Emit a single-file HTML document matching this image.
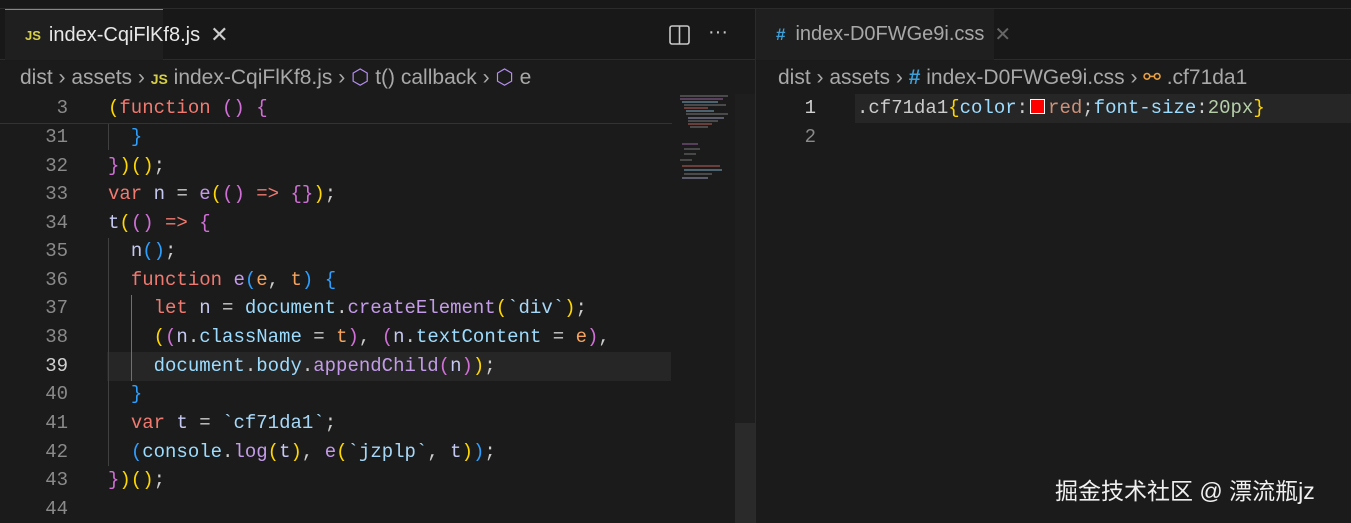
<!DOCTYPE html>
<html><head><meta charset="utf-8"><style>
*{margin:0;padding:0;box-sizing:border-box}
body{width:1351px;height:523px;background:#1a1a1a;overflow:hidden;position:relative;font-family:"Liberation Sans",sans-serif;color:#ccc}
.top{position:absolute;left:0;top:0;width:1351px;height:9px;background:#181818;border-bottom:1px solid #2b2b2b}
.tabbar{position:absolute;top:9px;height:51px;background:#181818;border-bottom:1px solid #2b2b2b}
.tab{position:absolute;top:0;height:51px;background:#1f1f1f;font-size:20px;display:flex;align-items:center;padding-left:20px;white-space:nowrap}
.crumb{position:absolute;top:65px;font-size:21px;color:#a8a8a8;white-space:nowrap;letter-spacing:0}
.code{position:absolute;font-family:"Liberation Mono",monospace;font-size:19px;white-space:pre}
.ln{position:absolute;width:68px;text-align:right;font-family:"Liberation Mono",monospace;font-size:19px;color:#8a8a8a}
.k{color:#f07a70}.v{color:#c5c8f0}.y{color:#ffd700}.p{color:#d070d6}.b{color:#2c9fff}.o{color:#f6a35e}.d{color:#9cdcfe}.m{color:#c39be8}.s{color:#a8d8f8}.w{color:#ccc}.c{color:#8fd0f0}
.sep{position:absolute;left:755px;top:9px;width:1px;height:514px;background:#2b2b2b}
</style></head><body>
<div class="top"></div>
<div class="tabbar" style="left:0;width:755px">
 <div class="tab" style="left:5px;width:158px;border-top:1px solid #3a9fd8;padding-left:20px"><span style="color:#d6cf48;font-size:13px;font-weight:bold;margin-right:8px">JS</span><span style="color:#e8e8e8">index-CqiFlKf8.js</span><span style="margin-left:10px;color:#ccc;font-size:22px">✕</span></div>
 <svg style="position:absolute;left:668px;top:15px" width="24" height="22" viewBox="0 0 24 22"><rect x="2" y="2" width="19" height="18" rx="2" fill="none" stroke="#c8c8c8" stroke-width="1.6"/><line x1="11.5" y1="2" x2="11.5" y2="20" stroke="#c8c8c8" stroke-width="1.6"/></svg>
 <div style="position:absolute;left:708px;top:12px;font-size:20px;color:#c8c8c8">···</div>
</div>
<div class="tabbar" style="left:756px;width:595px">
 <div class="tab" style="left:0;width:238px;background:#1f1f1f"><span style="color:#3d9fd8;font-size:17px;font-weight:bold;margin-right:10px">#</span><span style="color:#a8a8a8">index-D0FWGe9i.css</span><span style="margin-left:10px;color:#666;font-size:20px">✕</span></div>
</div>
<div class="sep"></div>
<div style="position:absolute;left:0;top:61px;width:755px;height:462px;background:#1b1b1b"></div>
<div style="position:absolute;left:756px;top:61px;width:595px;height:462px;background:#1b1b1b"></div>
<div class="crumb" style="left:20px">dist › assets › <span style="color:#d6cf48;font-size:14px;font-weight:bold">JS</span> index-CqiFlKf8.js › <span style="color:#b58ef0">⬡</span> t() callback › <span style="color:#b58ef0">⬡</span> e</div>
<div class="crumb" style="left:778px">dist › assets › <span style="color:#3d9fd8;font-weight:bold">#</span> index-D0FWGe9i.css › <span style="color:#e8a040">⚯</span> .cf71da1</div>

<!-- left editor -->
<div style="position:absolute;left:0;top:94px;width:672px;height:30px;border-bottom:1px solid #333;background:#1b1b1b"></div>
<div style="position:absolute;left:107px;top:352px;width:564px;height:29px;background:#262626"></div>
<div style="position:absolute;left:108px;top:124px;width:1px;height:26px;background:#404040"></div>
<div style="position:absolute;left:108px;top:238px;width:1px;height:228px;background:#404040"></div>
<div style="position:absolute;left:131px;top:295px;width:1px;height:86px;background:#707070"></div>
<div style="position:absolute;left:735px;top:94px;width:20px;height:429px;background:#1e1e1e"></div>
<div style="position:absolute;left:735px;top:423px;width:20px;height:100px;background:#2a2a2a"></div>
<svg style="position:absolute;left:678px;top:94px" width="56" height="90"><g stroke-width="1.2" opacity=".6">
<line x1="2" y1="2" x2="50" y2="2" stroke="#999"/><line x1="2" y1="5" x2="45" y2="5" stroke="#c080d0"/><line x1="4" y1="8" x2="40" y2="8" stroke="#9cdcfe"/><line x1="6" y1="11" x2="48" y2="11" stroke="#999"/><line x1="6" y1="14" x2="30" y2="14" stroke="#f07a70"/><line x1="8" y1="17" x2="36" y2="17" stroke="#9cdcfe"/><line x1="8" y1="20" x2="50" y2="20" stroke="#999"/><line x1="10" y1="24" x2="46" y2="24" stroke="#c5c8f0"/><line x1="10" y1="27" x2="40" y2="27" stroke="#999"/><line x1="10" y1="30" x2="34" y2="30" stroke="#f07a70"/><line x1="12" y1="33" x2="30" y2="33" stroke="#999"/><line x1="4" y1="50" x2="20" y2="50" stroke="#c080d0"/><line x1="6" y1="55" x2="22" y2="55" stroke="#999"/><line x1="6" y1="60" x2="18" y2="60" stroke="#999"/><line x1="2" y1="66" x2="14" y2="66" stroke="#999"/><line x1="4" y1="72" x2="42" y2="72" stroke="#f07a70"/><line x1="6" y1="76" x2="44" y2="76" stroke="#9cdcfe"/><line x1="6" y1="80" x2="34" y2="80" stroke="#999"/><line x1="4" y1="84" x2="30" y2="84" stroke="#c5c8f0"/></g></svg>

<div class="ln" style="top:97px">3</div>
<div class="code" style="left:108px;top:97px"><span class="y">(</span><span class="k">function</span> <span class="p">()</span> <span class="p">{</span></div>
<div class="ln" style="top:126px">31</div><div class="code" style="left:108px;top:126px">  <span class="b">}</span></div>
<div class="ln" style="top:155px">32</div><div class="code" style="left:108px;top:155px"><span class="p">}</span><span class="y">)()</span><span class="w">;</span></div>
<div class="ln" style="top:183px">33</div><div class="code" style="left:108px;top:183px"><span class="k">var</span> <span class="v">n</span> <span class="w">=</span> <span class="m">e</span><span class="y">(</span><span class="p">()</span> <span class="k">=&gt;</span> <span class="p">{}</span><span class="y">)</span><span class="w">;</span></div>
<div class="ln" style="top:212px">34</div><div class="code" style="left:108px;top:212px"><span class="v">t</span><span class="y">(</span><span class="p">()</span> <span class="k">=&gt;</span> <span class="p">{</span></div>
<div class="ln" style="top:240px">35</div><div class="code" style="left:108px;top:240px">  <span class="v">n</span><span class="b">()</span><span class="w">;</span></div>
<div class="ln" style="top:269px">36</div><div class="code" style="left:108px;top:269px">  <span class="k">function</span> <span class="m">e</span><span class="b">(</span><span class="o">e</span><span class="w">,</span> <span class="o">t</span><span class="b">)</span> <span class="b">{</span></div>
<div class="ln" style="top:297px">37</div><div class="code" style="left:108px;top:297px">    <span class="k">let</span> <span class="v">n</span> <span class="w">=</span> <span class="d">document</span><span class="w">.</span><span class="m">createElement</span><span class="y">(</span><span class="s">`div`</span><span class="y">)</span><span class="w">;</span></div>
<div class="ln" style="top:326px">38</div><div class="code" style="left:108px;top:326px">    <span class="y">(</span><span class="p">(</span><span class="v">n</span><span class="w">.</span><span class="d">className</span> <span class="w">=</span> <span class="o">t</span><span class="p">)</span><span class="w">,</span> <span class="p">(</span><span class="v">n</span><span class="w">.</span><span class="d">textContent</span> <span class="w">=</span> <span class="o">e</span><span class="p">)</span><span class="w">,</span></div>
<div class="ln" style="top:355px;color:#d0d0d0">39</div><div class="code" style="left:108px;top:355px">    <span class="d">document</span><span class="w">.</span><span class="d">body</span><span class="w">.</span><span class="m">appendChild</span><span class="p">(</span><span class="v">n</span><span class="p">)</span><span class="y">)</span><span class="w">;</span></div>
<div class="ln" style="top:383px">40</div><div class="code" style="left:108px;top:383px">  <span class="b">}</span></div>
<div class="ln" style="top:412px">41</div><div class="code" style="left:108px;top:412px">  <span class="k">var</span> <span class="v">t</span> <span class="w">=</span> <span class="s">`cf71da1`</span><span class="w">;</span></div>
<div class="ln" style="top:441px">42</div><div class="code" style="left:108px;top:441px">  <span class="b">(</span><span class="d">console</span><span class="w">.</span><span class="m">log</span><span class="y">(</span><span class="v">t</span><span class="y">)</span><span class="w">,</span> <span class="m">e</span><span class="y">(</span><span class="s">`jzplp`</span><span class="w">,</span> <span class="v">t</span><span class="y">)</span><span class="b">)</span><span class="w">;</span></div>
<div class="ln" style="top:469px">43</div><div class="code" style="left:108px;top:469px"><span class="p">}</span><span class="y">)()</span><span class="w">;</span></div>
<div class="ln" style="top:498px">44</div>

<!-- right editor -->
<div style="position:absolute;left:855px;top:94px;width:496px;height:29px;background:#262626"></div>
<div class="ln" style="left:748px;top:97px;color:#d0d0d0">1</div>
<div class="code" style="left:857px;top:97px"><span class="w">.cf71da1</span><span class="y">{</span><span class="d">color</span><span class="w">:</span><span style="display:inline-block;width:15px;height:15px;background:#f00;border:1px solid #fff;vertical-align:-1px;margin:0 3px 0 2px"></span><span style="color:#ce9178">red</span><span class="w">;</span><span class="d">font-size</span><span class="w">:</span><span style="color:#b5cea8">20px</span><span class="y">}</span></div>
<div class="ln" style="left:748px;top:126px">2</div>

<div style="position:absolute;left:1055px;top:472px;font-family:'Liberation Sans','Noto Sans CJK SC',sans-serif;font-size:23px;color:#f0f0f0;white-space:nowrap">掘金技术社区 @ 漂流瓶jz</div>
</body></html>
